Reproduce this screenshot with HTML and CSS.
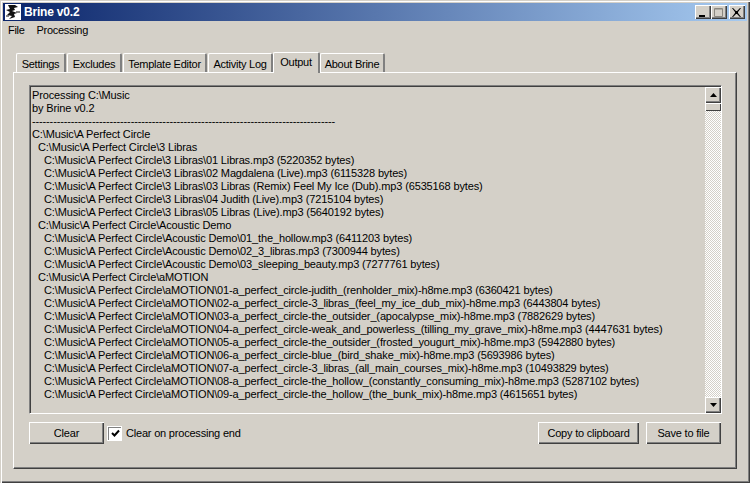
FILE: index.html
```html
<!DOCTYPE html>
<html lang="en">
<head>
<meta charset="utf-8">
<title>Brine v0.2</title>
<link rel="stylesheet" href="styles.css">
</head>
<body>
<div class="window">
  <header class="titlebar">
    <svg class="appicon" width="16" height="16" viewBox="0 0 16 16"><rect width="16" height="16" fill="#fff"/><path d="M3 1h7l3 2-4 1 1 2-3 1 5 2-3 1 1 3-6 2 3-3-5-1 3-3-4-2 4-1z" fill="#111"/><path d="M11 8h4M1 12h3" stroke="#111"/></svg>
    <span class="title">Brine v0.2</span>
    <div class="winbtns">
      <span class="winbtn"><svg width="10" height="9" viewBox="0 0 10 9"><rect x="1" y="7" width="6" height="2" fill="#000"/></svg></span>
      <span class="winbtn"><svg width="10" height="9" viewBox="0 0 10 9"><path d="M.5.5h8v8h-8z" fill="none" stroke="#8a8780"/><path d="M1 1h7" stroke="#8a8780"/></svg></span>
      <span class="winbtn close"><svg width="10" height="9" viewBox="0 0 10 9"><path d="M1 0l3 3 1 0 3-3h1L6 4v1l3 4H8L5 6H4L1 9H0l3-4V4L0 0z" fill="#000"/></svg></span>
    </div>
  </header>
  <nav class="menubar"><span class="menuitem">File</span><span class="menuitem">Processing</span></nav>
  <div class="tabs">
    <span class="tab t1">Settings</span>
    <span class="tab t2">Excludes</span>
    <span class="tab t3">Template Editor</span>
    <span class="tab t4">Activity Log</span>
    <span class="tab active t5">Output</span>
    <span class="tab t6">About Brine</span>
  </div>
  <section class="panel">
    <div class="log">
      <div class="logtext">
        <div>Processing C:\Music</div>
        <div>by Brine v0.2</div>
        <div>--------------------------------------------------------------------------------------</div>
        <div>C:\Music\A Perfect Circle</div>
        <div class="l1">C:\Music\A Perfect Circle\3 Libras</div>
        <div class="l2">C:\Music\A Perfect Circle\3 Libras\01 Libras.mp3 (5220352 bytes)</div>
        <div class="l2">C:\Music\A Perfect Circle\3 Libras\02 Magdalena (Live).mp3 (6115328 bytes)</div>
        <div class="l2">C:\Music\A Perfect Circle\3 Libras\03 Libras (Remix) Feel My Ice (Dub).mp3 (6535168 bytes)</div>
        <div class="l2">C:\Music\A Perfect Circle\3 Libras\04 Judith (Live).mp3 (7215104 bytes)</div>
        <div class="l2">C:\Music\A Perfect Circle\3 Libras\05 Libras (Live).mp3 (5640192 bytes)</div>
        <div class="l1">C:\Music\A Perfect Circle\Acoustic Demo</div>
        <div class="l2">C:\Music\A Perfect Circle\Acoustic Demo\01_the_hollow.mp3 (6411203 bytes)</div>
        <div class="l2">C:\Music\A Perfect Circle\Acoustic Demo\02_3_libras.mp3 (7300944 bytes)</div>
        <div class="l2">C:\Music\A Perfect Circle\Acoustic Demo\03_sleeping_beauty.mp3 (7277761 bytes)</div>
        <div class="l1">C:\Music\A Perfect Circle\aMOTION</div>
        <div class="l2">C:\Music\A Perfect Circle\aMOTION\01-a_perfect_circle-judith_(renholder_mix)-h8me.mp3 (6360421 bytes)</div>
        <div class="l2">C:\Music\A Perfect Circle\aMOTION\02-a_perfect_circle-3_libras_(feel_my_ice_dub_mix)-h8me.mp3 (6443804 bytes)</div>
        <div class="l2">C:\Music\A Perfect Circle\aMOTION\03-a_perfect_circle-the_outsider_(apocalypse_mix)-h8me.mp3 (7882629 bytes)</div>
        <div class="l2">C:\Music\A Perfect Circle\aMOTION\04-a_perfect_circle-weak_and_powerless_(tilling_my_grave_mix)-h8me.mp3 (4447631 bytes)</div>
        <div class="l2">C:\Music\A Perfect Circle\aMOTION\05-a_perfect_circle-the_outsider_(frosted_yougurt_mix)-h8me.mp3 (5942880 bytes)</div>
        <div class="l2">C:\Music\A Perfect Circle\aMOTION\06-a_perfect_circle-blue_(bird_shake_mix)-h8me.mp3 (5693986 bytes)</div>
        <div class="l2">C:\Music\A Perfect Circle\aMOTION\07-a_perfect_circle-3_libras_(all_main_courses_mix)-h8me.mp3 (10493829 bytes)</div>
        <div class="l2">C:\Music\A Perfect Circle\aMOTION\08-a_perfect_circle-the_hollow_(constantly_consuming_mix)-h8me.mp3 (5287102 bytes)</div>
        <div class="l2">C:\Music\A Perfect Circle\aMOTION\09-a_perfect_circle-the_hollow_(the_bunk_mix)-h8me.mp3 (4615651 bytes)</div>
      </div>
      <div class="scrollbar">
        <span class="sbtn"><svg width="7" height="4" viewBox="0 0 7 4"><path d="M3.5 0L7 4H0z" fill="#000"/></svg></span>
        <span class="thumb"></span>
        <span class="track"></span>
        <span class="sbtn"><svg width="7" height="4" viewBox="0 0 7 4"><path d="M0 0h7L3.5 4z" fill="#000"/></svg></span>
      </div>
    </div>
    <div class="actions">
      <button class="btn clear">Clear</button>
      <label class="check"><span class="box"><svg width="9" height="9" viewBox="0 0 9 9"><path d="M1 4l2.5 2.5L8 1.5" fill="none" stroke="#000" stroke-width="2"/></svg></span>Clear on processing end</label>
      <span class="spacer"></span>
      <button class="btn copy">Copy to clipboard</button>
      <button class="btn save">Save to file</button>
    </div>
  </section>
</div>
</body>
</html>
```
FILE: styles.css
```css
* { box-sizing: border-box; }
html, body { margin: 0; padding: 0; width: 750px; height: 483px; overflow: hidden; }
body { background: #d4d0c8; font: 11px/13px "Liberation Sans", Arial, sans-serif; letter-spacing: -0.14px; color: #000; }
.window {
  width: 750px; height: 483px; padding: 2px 3px 0 2px; display: flex; flex-direction: column;
  border-top: 1px solid #d4d0c8; border-left: 1px solid #d4d0c8;
  box-shadow: inset 1px 1px 0 #fff, inset -1px -1px 0 #404040, inset -2px -2px 0 #808080;
}
.titlebar {
  height: 18px; flex: none; display: flex; align-items: center; padding: 0 2px;
  background: linear-gradient(to right, #0a246a, #a6caf0);
  color: #fff; font-weight: bold; font-size: 12px; letter-spacing: -0.2px;
}
.appicon { margin-right: 3px; flex: none; }
.title { flex: 1; }
.winbtns { display: flex; }
.winbtn {
  width: 16px; height: 14px; display: flex; align-items: center; justify-content: center; background: #d4d0c8;
  box-shadow: inset 1px 1px 0 #fff, inset -1px -1px 0 #404040, inset -2px -2px 0 #808080;
}
.winbtn.close { margin-left: 2px; }
.menubar { height: 19px; flex: none; display: flex; align-items: center; letter-spacing: -0.3px; }
.menuitem { padding: 0 6px 0 5px; }
.menuitem + .menuitem { padding-left: 6px; }
.tabs { display: flex; align-items: flex-end; height: 32px; flex: none; padding-left: 13px; letter-spacing: -0.25px; position: relative; z-index: 1; }
.tab {
  height: 19px; padding-top: 4px; margin-right: 1px; text-align: center; white-space: nowrap; background: #d4d0c8;
  border-top: 1px solid #fff; border-left: 1px solid #fff; border-right: 2px solid #808080; border-radius: 2px 2px 0 0;
}
.t1 { width: 50px; }
.t2 { width: 55px; }
.t3 { width: 84px; }
.t4 { width: 65px; }
.t6 { width: 65px; }
.tab.active { width: 47px; height: 21px; padding-top: 3px; margin: 0 0 -1px -1px; position: relative; z-index: 2; }
.panel {
  width: 724px; height: 397px; margin-left: 10px; padding: 12px 14px 0 15px; display: flex; flex-direction: column;
  border-top: 1px solid #fff; border-left: 1px solid #fff; border-right: 1px solid #404040; border-bottom: 1px solid #404040;
  box-shadow: inset -1px -1px 0 #808080;
}
.log {
  height: 329px; flex: none; display: flex;
  border-top: 1px solid #808080; border-left: 1px solid #808080; border-right: 1px solid #fff; border-bottom: 1px solid #fff;
  box-shadow: inset 1px 1px 0 #404040;
}
.logtext { flex: 1; padding: 3px 0 0 2px; overflow: hidden; white-space: nowrap; }
.l1 { padding-left: 6px; }
.l2 { padding-left: 12px; }
.scrollbar { width: 16px; flex: none; display: flex; flex-direction: column; margin-top: 1px; }
.sbtn {
  height: 16px; flex: none; display: flex; align-items: center; justify-content: center; background: #d4d0c8;
  box-shadow: inset 1px 1px 0 #fff, inset -1px -1px 0 #404040, inset -2px -2px 0 #808080;
}
.thumb { height: 8px; flex: none; background: #d4d0c8; box-shadow: inset 1px 1px 0 #fff, inset -1px -1px 0 #404040; }
.track { flex: 1; background: repeating-conic-gradient(#fff 0 25%, #d4d0c8 0 50%) 0 0 / 2px 2px; }
.actions { display: flex; align-items: center; margin-top: 8px; height: 22px; letter-spacing: -0.2px; }
.btn {
  height: 22px; padding: 0; background: #d4d0c8; border: 0; font: inherit; letter-spacing: inherit; color: #000;
  box-shadow: inset 1px 1px 0 #fff, inset -1px -1px 0 #404040, inset -2px -2px 0 #808080;
}
.clear { width: 75px; }
.copy { width: 101px; margin-right: 7px; }
.save { width: 75px; margin-right: 1px; }
.check { display: flex; align-items: center; margin-left: 4px; }
.box {
  width: 13px; height: 13px; margin-right: 5px; background: #fff; display: flex; align-items: center; justify-content: center;
  border-top: 1px solid #808080; border-left: 1px solid #808080; box-shadow: 0 0 0 1px #fff;
}
.spacer { flex: 1; }
```
